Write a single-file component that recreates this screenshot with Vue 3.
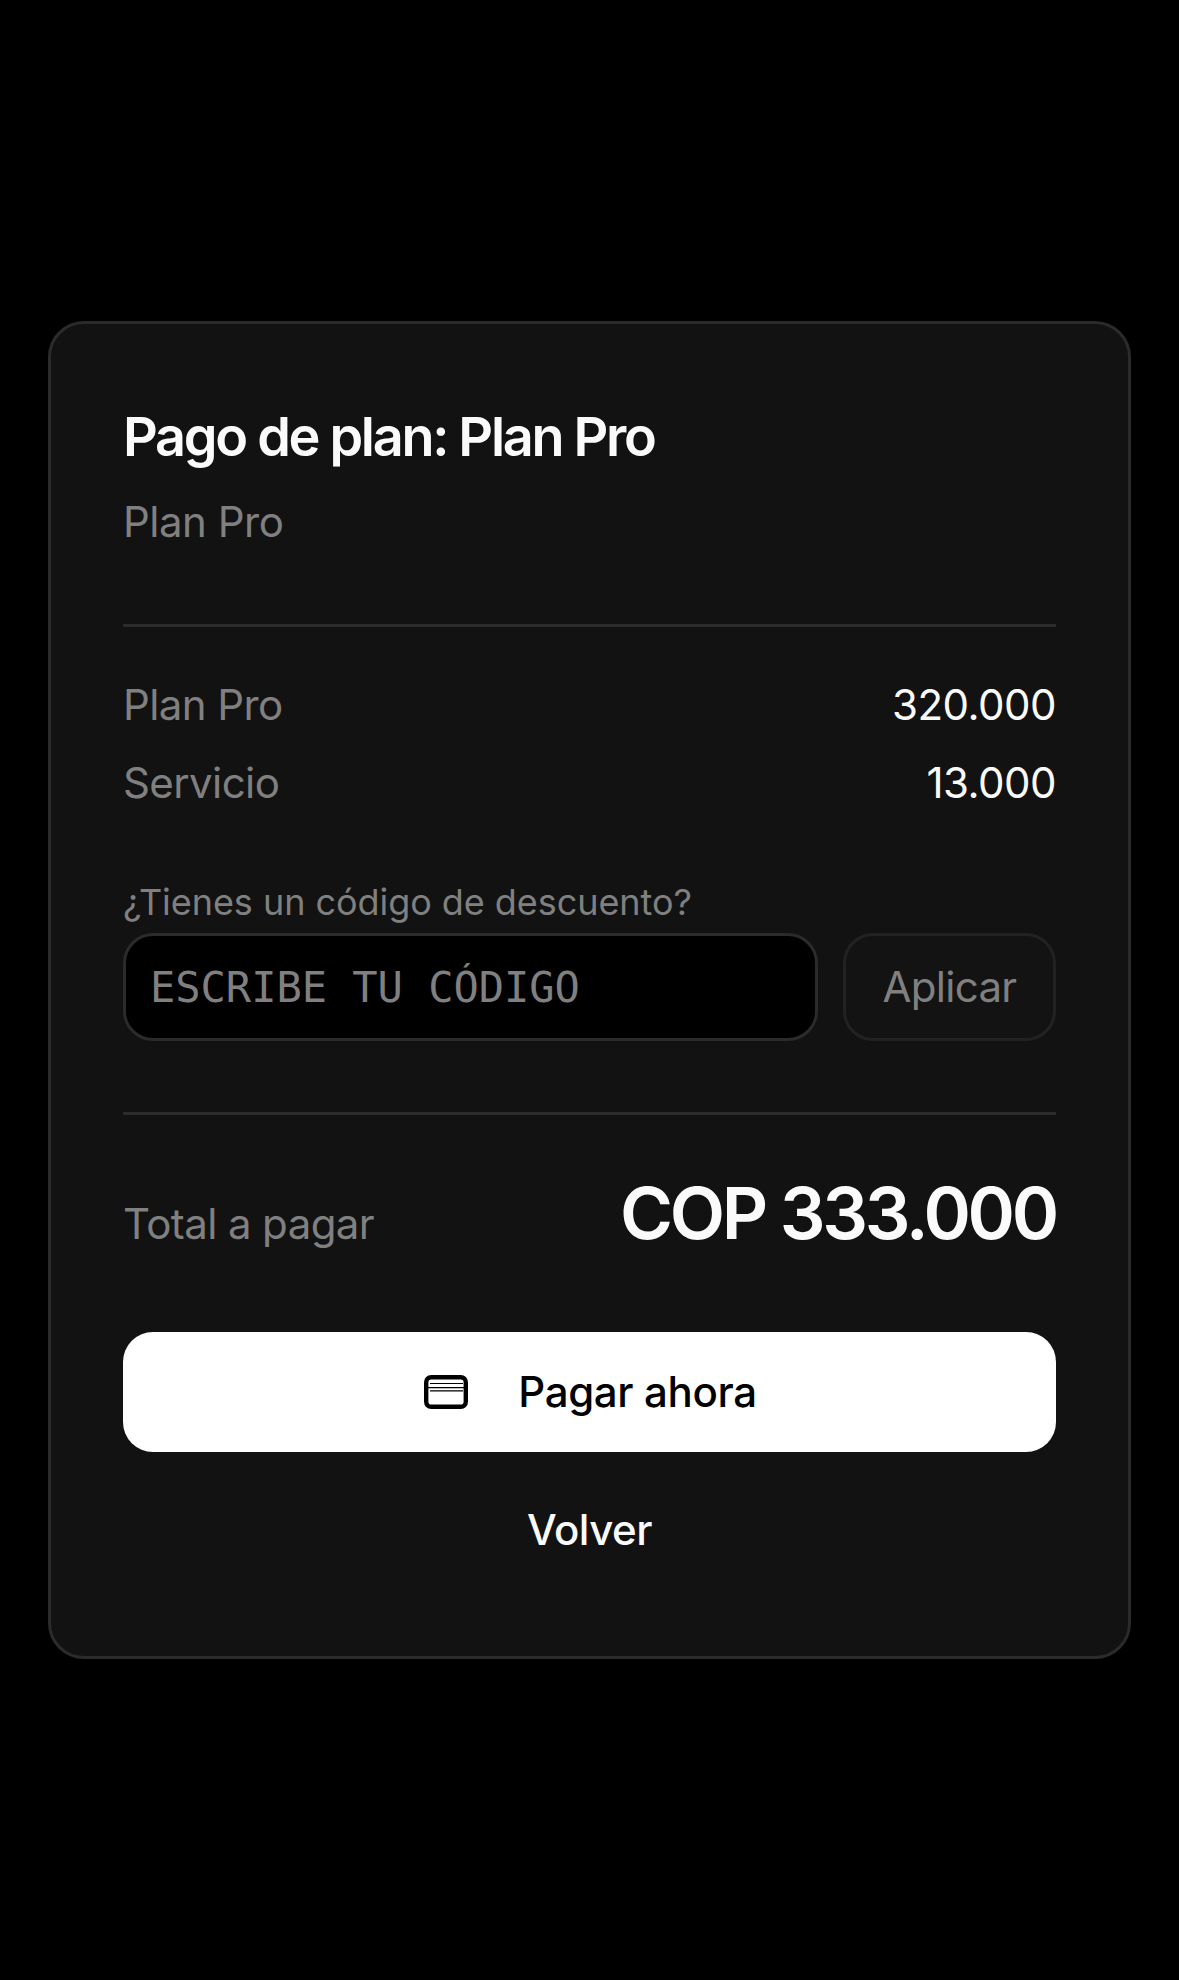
<template>
  <div class="page">
    <section class="card">
      <header class="head">
        <h1 class="title">Pago de plan: Plan Pro</h1>
        <p class="subtitle">Plan Pro</p>
      </header>

      <div class="rows">
        <div v-for="row in rows" :key="row.label" class="row">
          <span class="muted">{{ row.label }}</span>
          <span class="amount">{{ row.amount }}</span>
        </div>
      </div>

      <div class="discount">
        <label class="discount-label" for="code">¿Tienes un código de descuento?</label>
        <div class="discount-row">
          <input id="code" class="code-input" type="text" placeholder="ESCRIBE TU CÓDIGO" />
          <button class="apply" type="button">Aplicar</button>
        </div>
      </div>

      <div class="total">
        <span class="muted">Total a pagar</span>
        <strong class="total-value">COP 333.000</strong>
      </div>

      <button class="pay" type="button">
        <svg class="pay-icon" viewBox="0 0 44 34" width="44" height="34" fill="none" aria-hidden="true">
          <rect x="2.2" y="2.2" width="39.6" height="29.6" rx="5" stroke="#000" stroke-width="4.4" />
          <path d="M6 8.5h33M4 12.6h36M6 15.8h33" stroke="#000" stroke-width="1.2" />
        </svg>
        <span>Pagar ahora</span>
      </button>
      <button class="back" type="button">Volver</button>
    </section>
  </div>
</template>

<script setup>
const rows = [
  { label: 'Plan Pro', amount: '320.000' },
  { label: 'Servicio', amount: '13.000' },
]
</script>

<style>
html,
body {
  background: #000;
}
</style>

<style scoped>
.page {
  min-height: 1980px;
  box-sizing: border-box;
  padding: 0 48px;
  display: flex;
  align-items: center;
  justify-content: center;
  background: #000;
  font-family: Inter, 'Liberation Sans', sans-serif;
}
.card {
  width: 100%;
  box-sizing: border-box;
  padding: 77px 72px 71px;
  background: #121212;
  border: 3px solid #2b2b2b;
  border-radius: 36px;
}
.head {
  padding-bottom: 72px;
  border-bottom: 3px solid #2b2b2b;
}
.title {
  margin: 0;
  font-size: 54px;
  line-height: 72px;
  font-weight: 600;
  letter-spacing: -2.3px;
  color: #fafafa;
}
.subtitle {
  margin: 19px 0 0;
  font-size: 42px;
  line-height: 60px;
  letter-spacing: -0.5px;
  color: #808080;
}
.rows {
  padding-top: 48px;
  display: flex;
  flex-direction: column;
  gap: 18px;
}
.row {
  display: flex;
  justify-content: space-between;
  align-items: center;
  font-size: 42px;
  line-height: 60px;
  letter-spacing: -0.5px;
}
.muted {
  color: #808080;
  font-size: 42px;
  letter-spacing: -0.6px;
}
.amount {
  color: #fafafa;
}
.discount {
  margin-top: 65px;
  padding-bottom: 71px;
  border-bottom: 3px solid #2b2b2b;
}
.discount-label {
  display: block;
  font-size: 36px;
  line-height: 48px;
  letter-spacing: -0.05px;
  color: #808080;
}
.discount-row {
  margin-top: 7px;
  display: flex;
  gap: 25px;
}
.code-input {
  flex: 1;
  min-width: 0;
  height: 108px;
  box-sizing: border-box;
  padding: 0 24px;
  background: #000;
  border: 3px solid #2b2b2b;
  border-radius: 30px;
  outline: none;
  font-family: 'DejaVu Sans Mono', monospace;
  font-size: 42px;
  color: #fafafa;
}
.code-input::placeholder {
  color: #808080;
  opacity: 1;
}
.apply {
  width: 213px;
  height: 108px;
  padding: 0 0 2px;
  background: #131313;
  border: 3px solid #222;
  border-radius: 30px;
  font-family: inherit;
  font-size: 42px;
  letter-spacing: -0.7px;
  color: #808080;
}
.total {
  margin-top: 56px;
  display: flex;
  justify-content: space-between;
  align-items: baseline;
}
.total-value {
  font-size: 72px;
  line-height: 84px;
  font-weight: 600;
  letter-spacing: -3.3px;
  color: #fafafa;
}
.pay {
  margin-top: 77px;
  width: 100%;
  height: 120px;
  padding: 0 0 1px 2px;
  display: flex;
  align-items: center;
  justify-content: center;
  gap: 50px;
  background: #fff;
  border: none;
  border-radius: 30px;
  font-family: inherit;
  font-size: 42px;
  font-weight: 450;
  letter-spacing: -0.35px;
  color: #000;
}
.back {
  margin-top: 25px;
  width: 100%;
  height: 108px;
  padding: 0 0 3px;
  background: none;
  border: none;
  font-family: inherit;
  font-size: 42px;
  font-weight: 450;
  letter-spacing: -0.5px;
  color: #fafafa;
}
</style>
